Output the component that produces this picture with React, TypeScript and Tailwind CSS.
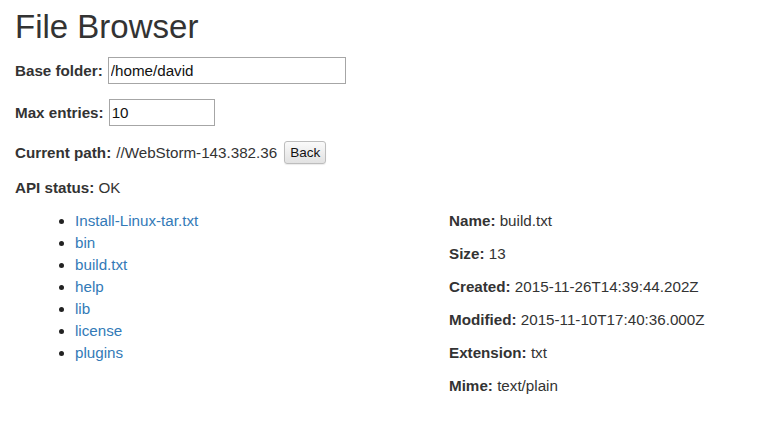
import React, { useState } from 'react';

interface FileInfo {
  name: string;
  size: number;
  created: string;
  modified: string;
  extension: string;
  mime: string;
}

const entries = ['Install-Linux-tar.txt', 'bin', 'build.txt', 'help', 'lib', 'license', 'plugins'];

const selected: FileInfo = {
  name: 'build.txt',
  size: 13,
  created: '2015-11-26T14:39:44.202Z',
  modified: '2015-11-10T17:40:36.000Z',
  extension: 'txt',
  mime: 'text/plain',
};

const App = () => {
  const [baseFolder, setBaseFolder] = useState('/home/david');
  const [maxEntries, setMaxEntries] = useState('10');

  const details: [string, string][] = [
    ['Name', selected.name],
    ['Size', String(selected.size)],
    ['Created', selected.created],
    ['Modified', selected.modified],
    ['Extension', selected.extension],
    ['Mime', selected.mime],
  ];

  return (
    <div className="min-h-screen bg-white px-[15px] text-[15.2px] leading-[22px] text-[#333] font-['Liberation_Sans',Arial,sans-serif]">
      <h1 className="pt-[9px] mb-[12px] text-[33px] leading-[36px] font-normal">File Browser</h1>

      <div className="flex h-[27px] items-center mb-[15px]">
        <span className="font-bold">Base folder:</span>
        <input
          type="text"
          value={baseFolder}
          onChange={(e) => setBaseFolder(e.target.value)}
          className="ml-[5px] h-[27px] w-[238px] border border-[#a6a6a6] bg-white px-[2px] text-[15.2px] text-[#111] outline-none"
        />
      </div>

      <div className="flex h-[27px] items-center mb-[15px]">
        <span className="font-bold">Max entries:</span>
        <input
          type="text"
          value={maxEntries}
          onChange={(e) => setMaxEntries(e.target.value)}
          className="ml-[5px] h-[27px] w-[106px] border border-[#a6a6a6] bg-white px-[2px] text-[15.2px] text-[#111] outline-none"
        />
      </div>

      <div className="flex h-[23px] items-center mb-[13px]">
        <span className="font-bold">Current path:</span>
        <span className="ml-[5px]">//WebStorm-143.382.36</span>
        <button
          type="button"
          className="ml-[7px] h-[23px] w-[42px] rounded-[3px] border border-[#bdbdbd] bg-gradient-to-b from-[#fafafa] to-[#e2e2e2] text-[13.5px] leading-none text-[#111] shadow-[0_1px_1px_rgba(0,0,0,0.08)]"
        >
          Back
        </button>
      </div>

      <p className="mb-[11px]">
        <span className="font-bold">API status:</span> OK
      </p>

      <div className="flex">
        <ul className="w-[434px] list-disc pl-[60px] marker:text-[#222]">
          {entries.map((entry) => (
            <li key={entry}>
              <a href="#" className="text-[#337ab7] hover:underline">
                {entry}
              </a>
            </li>
          ))}
        </ul>
        <div className="flex-1">
          {details.map(([label, value]) => (
            <p key={label} className="mb-[11px]">
              <span className="font-bold">{label}:</span> {value}
            </p>
          ))}
        </div>
      </div>
    </div>
  );
};

export default App;
